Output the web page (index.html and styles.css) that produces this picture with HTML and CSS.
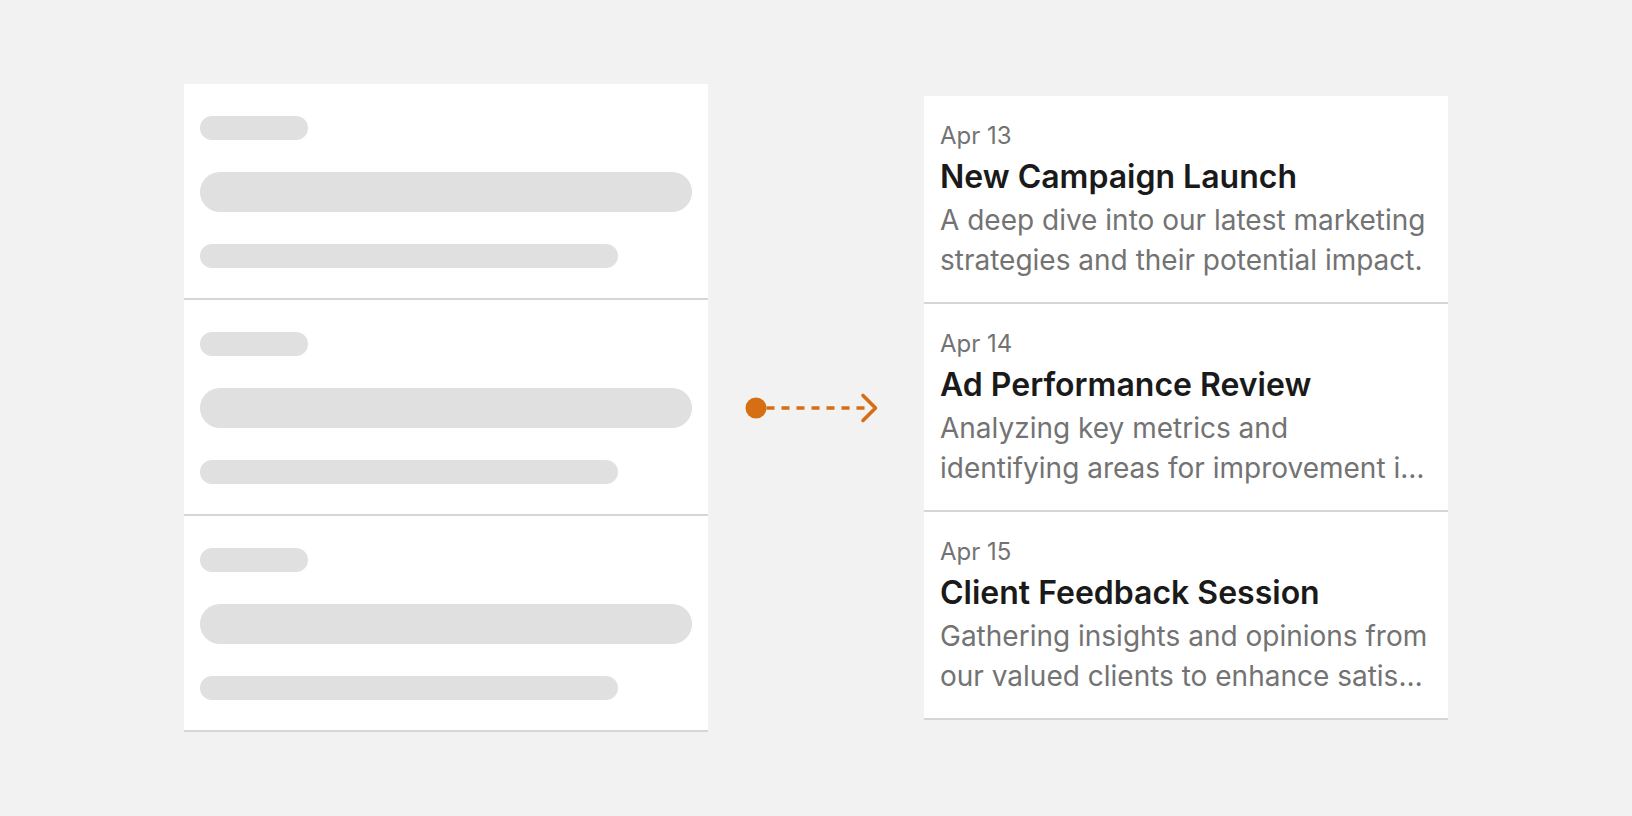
FILE: index.html
```html
<!DOCTYPE html>
<html lang="en">
<head>
<meta charset="utf-8">
<title>Skeleton to content</title>
<link rel="stylesheet" href="styles.css">
</head>
<body>
<main class="stage">
  <section class="panel skeleton">
    <div class="sk-row">
      <div class="sk sk-date"></div>
      <div class="sk sk-title"></div>
      <div class="sk sk-text"></div>
    </div>
    <div class="sk-row">
      <div class="sk sk-date"></div>
      <div class="sk sk-title"></div>
      <div class="sk sk-text"></div>
    </div>
    <div class="sk-row">
      <div class="sk sk-date"></div>
      <div class="sk sk-title"></div>
      <div class="sk sk-text"></div>
    </div>
  </section>

  <div class="connector">
    <svg class="arrow" width="216" height="40" viewBox="0 0 216 40" aria-hidden="true">
      <circle cx="48" cy="20" r="10.5" fill="#d66e14"/>
      <line x1="58.5" y1="20" x2="157" y2="20" stroke="#d66e14" stroke-width="3.6" stroke-dasharray="8 7"/>
      <polyline points="155,7.5 167.5,20 155,32.5" fill="none" stroke="#d66e14" stroke-width="3.6" stroke-linecap="round" stroke-linejoin="round"/>
    </svg>
  </div>

  <section class="panel feed">
    <article class="item">
      <div class="date">Apr 13</div>
      <h2 class="title">New Campaign Launch</h2>
      <p class="desc">A deep dive into our latest marketing strategies and their potential impact.</p>
    </article>
    <article class="item">
      <div class="date">Apr 14</div>
      <h2 class="title">Ad Performance Review</h2>
      <p class="desc">Analyzing key metrics and<br>identifying areas for improvement in our current ad campaigns.</p>
    </article>
    <article class="item">
      <div class="date">Apr 15</div>
      <h2 class="title">Client Feedback Session</h2>
      <p class="desc desc-break">Gathering insights and opinions from our valued clients to enhance satisfaction and loyalty.</p>
    </article>
  </section>
</main>
</body>
</html>
```

FILE: styles.css
```css
* { box-sizing: border-box; }

html, body {
  margin: 0;
  padding: 0;
}

body {
  background: #f2f2f2;
  font-family: Inter, "Noto Sans", "Liberation Sans", sans-serif;
}

.stage {
  height: 816px;
  display: flex;
  align-items: center;
  justify-content: center;
}

.panel {
  width: 524px;
  background: #ffffff;
  display: flex;
  flex-direction: column;
}

.sk-row {
  display: flex;
  flex-direction: column;
  gap: 32px;
  padding: 32px 16px 30px;
  border-bottom: 2px solid #d6d6d6;
}

.sk {
  background: #e0e0e0;
  border-radius: 999px;
}

.sk-date { width: 108px; height: 24px; }
.sk-title { width: 100%; height: 40px; }
.sk-text { width: 418px; height: 24px; }

.connector {
  width: 216px;
  display: flex;
  align-items: center;
  justify-content: center;
}

.arrow { display: block; }

.item {
  padding: 24px 16px 22px;
  border-bottom: 2px solid #d6d6d6;
}

.date {
  font-size: 24px;
  line-height: 32px;
  color: #737373;
}

.title {
  margin: 2px 0 0;
  font-size: 32px;
  line-height: 46px;
  font-weight: 600;
  color: #1a1a1a;
}

.desc {
  margin: 0;
  font-size: 28px;
  line-height: 40px;
  color: #737373;
  display: -webkit-box;
  -webkit-box-orient: vertical;
  -webkit-line-clamp: 2;
  overflow: hidden;
}

.desc-break {
  word-break: break-all;
}
```
